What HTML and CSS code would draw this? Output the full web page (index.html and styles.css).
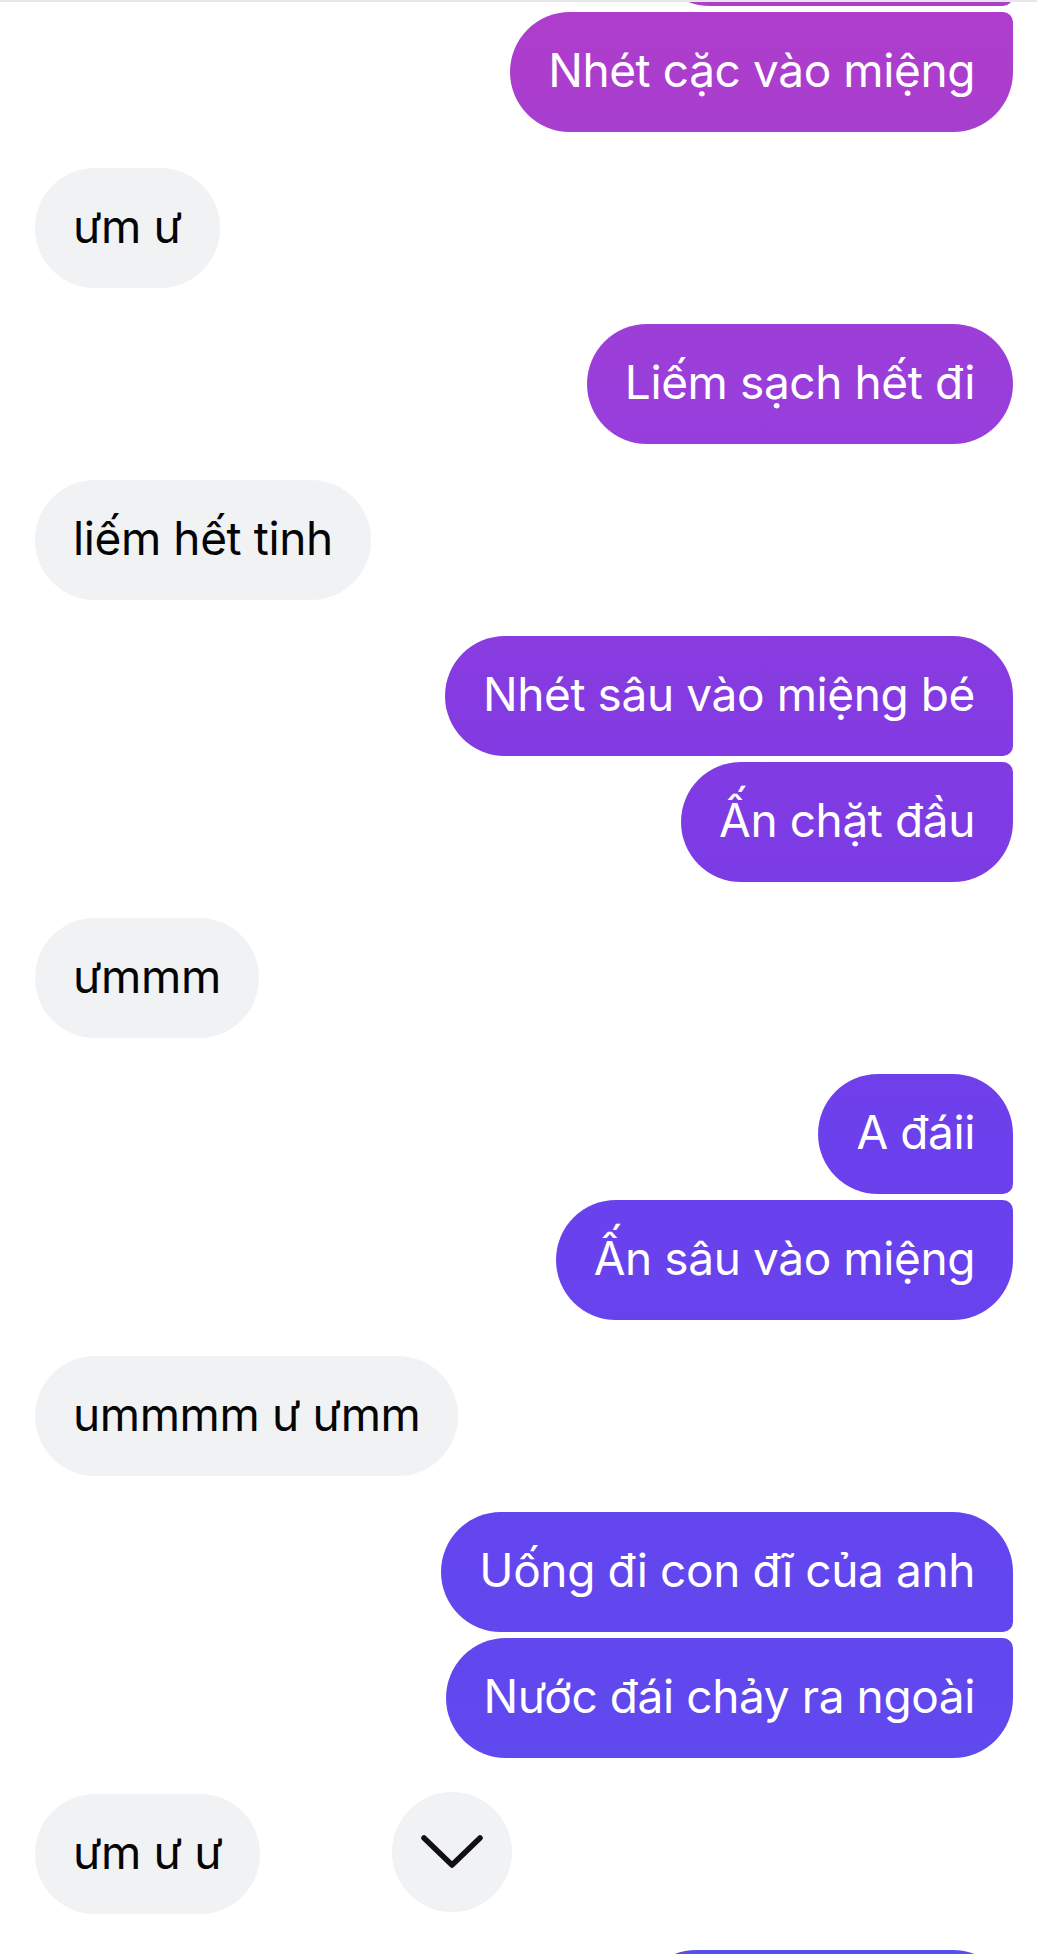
FILE: index.html
```html
<!DOCTYPE html>
<html lang="vi">
<head>
<meta charset="utf-8">
<title>Chat</title>
<link rel="stylesheet" href="styles.css">
</head>
<body>
<div class="screen">
  <div class="topline"></div>
  <div class="thread">
    <div class="group out">
      <div class="bubble sent first partial"></div>
      <div class="bubble sent last">Nhét cặc vào miệng</div>
    </div>
    <div class="group in">
      <div class="bubble recv single">ưm ư</div>
    </div>
    <div class="group out">
      <div class="bubble sent single">Liếm sạch hết đi</div>
    </div>
    <div class="group in">
      <div class="bubble recv single">liếm hết tinh</div>
    </div>
    <div class="group out">
      <div class="bubble sent first">Nhét sâu vào miệng bé</div>
      <div class="bubble sent last">Ấn chặt đầu</div>
    </div>
    <div class="group in">
      <div class="bubble recv single">ưmmm</div>
    </div>
    <div class="group out">
      <div class="bubble sent first">A đáii</div>
      <div class="bubble sent last">Ấn sâu vào miệng</div>
    </div>
    <div class="group in">
      <div class="bubble recv single">ummmm ư ưmm</div>
    </div>
    <div class="group out">
      <div class="bubble sent first">Uống đi con đĩ của anh</div>
      <div class="bubble sent last">Nước đái chảy ra ngoài</div>
    </div>
    <div class="group in">
      <div class="bubble recv single">ưm ư ư</div>
    </div>
    <div class="group out">
      <div class="bubble sent first tail"></div>
    </div>
  </div>
  <button class="scroll-down" aria-label="Cuộn xuống">
    <svg width="64" height="64" viewBox="0 0 64 64"><path d="M4 17 L32 44 L60 17" fill="none" stroke="#111114" stroke-width="5.5" stroke-linecap="round" stroke-linejoin="round"/></svg>
  </button>
</div>
</body>
</html>
```
FILE: styles.css
```css
html, body {
  margin: 0;
  padding: 0;
  background: #ffffff;
}

.screen {
  position: relative;
  width: 1037px;
  height: 1954px;
  overflow: hidden;
  background: #ffffff;
  font-family: Inter, "Noto Sans", "Liberation Sans", sans-serif;
}

.topline {
  height: 2px;
  background: #e6e7ea;
  position: relative;
  z-index: 2;
}

.thread {
  margin-top: -116px;
  display: flex;
  flex-direction: column;
  gap: 36px;
  padding: 0 24px 0 35px;
}

.group {
  display: flex;
  flex-direction: column;
  gap: 6px;
}

.group.out { align-items: flex-end; }
.group.in { align-items: flex-start; }

.bubble {
  box-sizing: border-box;
  height: 120px;
  display: flex;
  align-items: center;
  padding: 0 38px 4px;
  font-size: 46px;
  letter-spacing: -0.4px;
  white-space: nowrap;
  border-radius: 60px;
}

.sent {
  color: #ffffff;
  background-image: linear-gradient(to bottom, #b03dcb 0px, #a83ece 120px, #993edb 400px, #853be1 700px, #7a3ce5 900px, #6c40ec 1130px, #6643ee 1350px, #6147ee 1650px, #5a4fee 1954px);
  background-attachment: fixed;
}

.recv {
  color: #050505;
  background: #f1f2f4;
}

.sent.first { border-bottom-right-radius: 10px; }
.sent.last { border-top-right-radius: 10px; }

.partial { width: 363px; }
.tail { width: 377px; }

.scroll-down {
  position: absolute;
  left: 392px;
  top: 1792px;
  width: 120px;
  height: 120px;
  border: none;
  border-radius: 50%;
  background: #f1f2f4;
  padding: 0;
  display: flex;
  align-items: center;
  justify-content: center;
}

.scroll-down svg {
  display: block;
  margin-top: 2px;
}
```
